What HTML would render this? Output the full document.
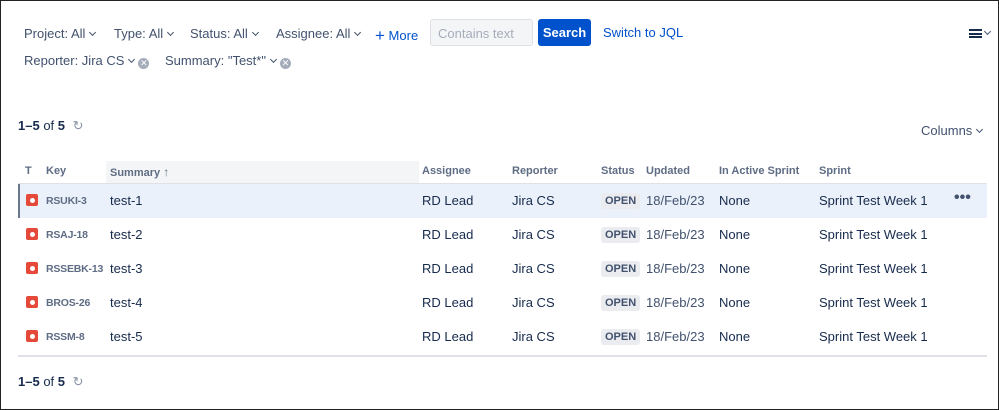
<!DOCTYPE html>
<html><head><style>
*{margin:0;padding:0;box-sizing:border-box}
body{width:999px;height:410px;overflow:hidden;background:#fff;font-family:"Liberation Sans",sans-serif;position:relative;border:1px solid #222}
.a{position:absolute;white-space:nowrap}
.f{color:#42526e;font-size:13px}
.chev{display:inline-block;width:5px;height:5px;border-right:1.6px solid #42526e;border-bottom:1.6px solid #42526e;transform:rotate(45deg);margin-left:5px;position:relative;top:-3px}
.x{display:inline-block;width:11px;height:11px;border-radius:50%;background:#a5adba;color:#fff;font-size:9px;line-height:11px;text-align:center;margin-left:4px;position:relative;top:1px}
.h{font-size:11px;font-weight:bold;color:#5e6c84;top:164px}
.row{position:absolute;left:17px;width:969px;height:34px}
.c{position:absolute;font-size:13px;color:#172b4d;white-space:nowrap}
.icon{position:absolute;left:8px;top:10px;width:12px;height:12px;background:#e5493a;border-radius:2px}
.icon:after{content:"";position:absolute;left:3.5px;top:3.5px;width:5px;height:5px;border-radius:50%;background:#fff}
.key{left:28px;font-size:10.5px;font-weight:bold;color:#5e6c84;top:11px;letter-spacing:-0.2px}
.lz{display:inline-block;background:#ebecf0;color:#42526e;font-size:11px;font-weight:bold;padding:2px 4px;border-radius:3px}
</style></head><body>
<div class="a f" style="left:23px;top:25px">Project: All<span class="chev"></span></div>
<div class="a f" style="left:113px;top:25px">Type: All<span class="chev"></span></div>
<div class="a f" style="left:189px;top:25px">Status: All<span class="chev"></span></div>
<div class="a f" style="left:275px;top:25px">Assignee: All<span class="chev"></span></div>
<div class="a" style="left:374px;top:24px;color:#0052cc;font-size:13px"><b style="font-size:17px;font-weight:normal;position:relative;top:1px">+</b> More</div>
<div class="a" style="left:429px;top:18px;width:103px;height:27px;background:#f4f5f7;border:1px solid #dfe1e6;border-radius:3px;color:#a5adba;font-size:13px;padding:6px 7px">Contains text</div>
<div class="a" style="left:537px;top:18px;width:53px;height:27px;background:#0052cc;border-radius:3px;color:#fff;font-size:13px;font-weight:bold;text-align:center;line-height:27px">Search</div>
<div class="a" style="left:602px;top:24px;color:#0052cc;font-size:13px">Switch to JQL</div>
<div class="a" style="left:968px;top:28px;width:13px;height:9px;border-top:2px solid #172b4d;border-bottom:2px solid #172b4d"><div style="margin-top:1.5px;height:2px;background:#172b4d"></div></div>
<div class="a" style="left:984px;top:28px;width:5px;height:5px;border-right:1.5px solid #42526e;border-bottom:1.5px solid #42526e;transform:rotate(45deg)"></div>
<div class="a f" style="left:23px;top:52px">Reporter: Jira CS<span class="chev"></span><span class="x">✕</span></div>
<div class="a f" style="left:164px;top:52px">Summary: "Test*"<span class="chev"></span><span class="x">✕</span></div>
<div class="a" style="left:17px;top:117px;font-size:13px;color:#172b4d"><b>1–5</b> of <b>5</b> <span style="color:#8993a4;margin-left:4px">↻</span></div>
<div class="a f" style="left:920px;top:122px">Columns<span class="chev"></span></div>
<div class="a" style="left:105px;top:160px;width:313px;height:22px;background:#f4f5f7"></div>
<div class="a h" style="left:24px">T</div>
<div class="a h" style="left:45px">Key</div>
<div class="a h" style="left:109px">Summary <span style="font-size:12px">↑</span></div>
<div class="a h" style="left:421px">Assignee</div>
<div class="a h" style="left:511px">Reporter</div>
<div class="a h" style="left:600px">Status</div>
<div class="a h" style="left:645px">Updated</div>
<div class="a h" style="left:718px">In Active Sprint</div>
<div class="a h" style="left:818px">Sprint</div>
<div class="a" style="left:17px;top:182px;width:969px;height:2px;background:#dfe1e6"></div>

<div class="row" style="top:183px;background:#ebf1fa;box-shadow:inset 2px 0 0 #6b778c"><div class="icon"></div><div class="c key">RSUKI-3</div><div class="c" style="left:92px;top:9px">test-1</div><div class="c" style="left:404px;top:9px">RD Lead</div><div class="c" style="left:494px;top:9px">Jira CS</div><div class="c" style="left:583px;top:8px"><span class="lz">OPEN</span></div><div class="c" style="left:628px;top:9px;color:#42526e">18/Feb/23</div><div class="c" style="left:701px;top:9px">None</div><div class="c" style="left:801px;top:9px">Sprint Test Week 1</div><div class="c" style="left:936px;top:5px;font-size:16px;font-weight:bold;color:#42526e">•••</div></div>
<div class="row" style="top:217px"><div class="icon"></div><div class="c key">RSAJ-18</div><div class="c" style="left:92px;top:9px">test-2</div><div class="c" style="left:404px;top:9px">RD Lead</div><div class="c" style="left:494px;top:9px">Jira CS</div><div class="c" style="left:583px;top:8px"><span class="lz">OPEN</span></div><div class="c" style="left:628px;top:9px;color:#42526e">18/Feb/23</div><div class="c" style="left:701px;top:9px">None</div><div class="c" style="left:801px;top:9px">Sprint Test Week 1</div></div>
<div class="row" style="top:251px"><div class="icon"></div><div class="c key">RSSEBK-13</div><div class="c" style="left:92px;top:9px">test-3</div><div class="c" style="left:404px;top:9px">RD Lead</div><div class="c" style="left:494px;top:9px">Jira CS</div><div class="c" style="left:583px;top:8px"><span class="lz">OPEN</span></div><div class="c" style="left:628px;top:9px;color:#42526e">18/Feb/23</div><div class="c" style="left:701px;top:9px">None</div><div class="c" style="left:801px;top:9px">Sprint Test Week 1</div></div>
<div class="row" style="top:285px"><div class="icon"></div><div class="c key">BROS-26</div><div class="c" style="left:92px;top:9px">test-4</div><div class="c" style="left:404px;top:9px">RD Lead</div><div class="c" style="left:494px;top:9px">Jira CS</div><div class="c" style="left:583px;top:8px"><span class="lz">OPEN</span></div><div class="c" style="left:628px;top:9px;color:#42526e">18/Feb/23</div><div class="c" style="left:701px;top:9px">None</div><div class="c" style="left:801px;top:9px">Sprint Test Week 1</div></div>
<div class="row" style="top:319px"><div class="icon"></div><div class="c key">RSSM-8</div><div class="c" style="left:92px;top:9px">test-5</div><div class="c" style="left:404px;top:9px">RD Lead</div><div class="c" style="left:494px;top:9px">Jira CS</div><div class="c" style="left:583px;top:8px"><span class="lz">OPEN</span></div><div class="c" style="left:628px;top:9px;color:#42526e">18/Feb/23</div><div class="c" style="left:701px;top:9px">None</div><div class="c" style="left:801px;top:9px">Sprint Test Week 1</div></div>
<div class="a" style="left:17px;top:354px;width:969px;height:2px;background:#dfe1e6"></div>
<div class="a" style="left:17px;top:373px;font-size:13px;color:#172b4d"><b>1–5</b> of <b>5</b> <span style="color:#8993a4;margin-left:4px">↻</span></div>
</body></html>
